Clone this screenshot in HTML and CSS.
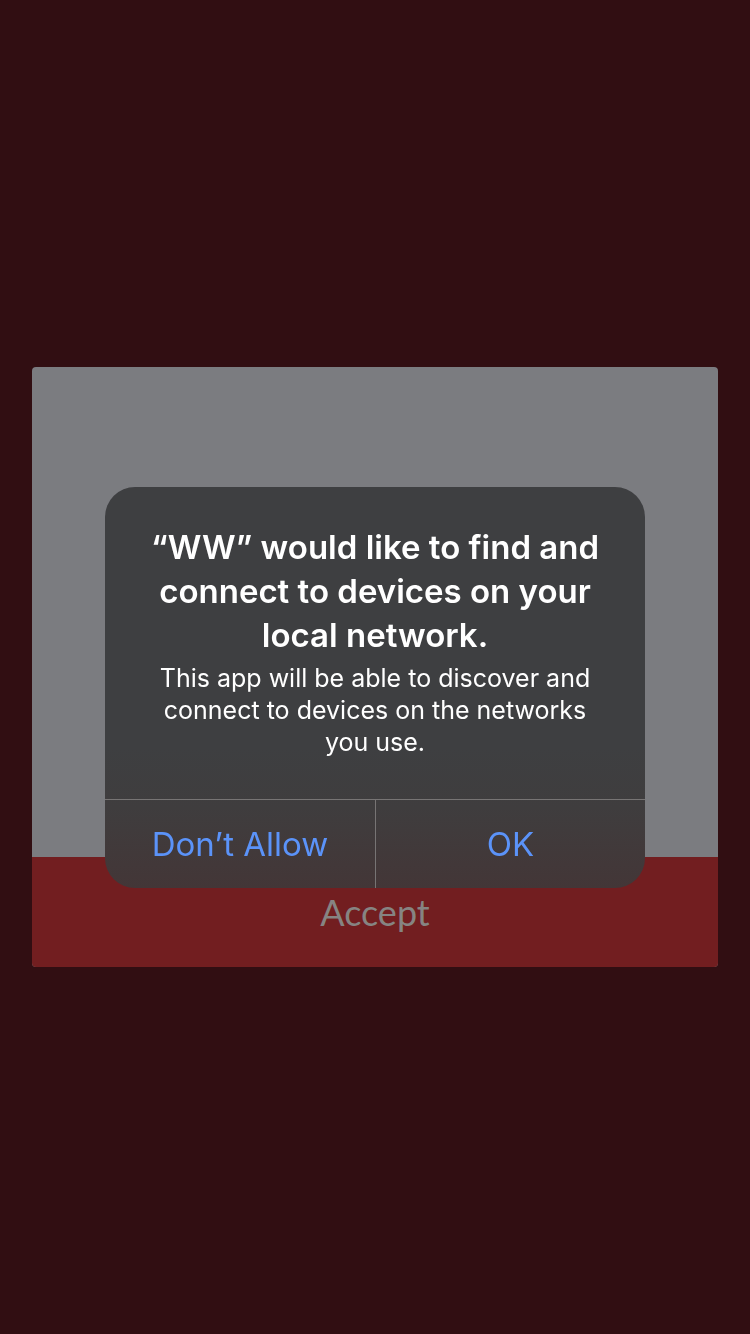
FILE: index.html
```html
<!DOCTYPE html>
<html lang="en">
<head>
  <meta charset="utf-8">
  <meta name="viewport" content="width=device-width, initial-scale=1">
  <title>WW</title>
  <link rel="stylesheet" href="styles.css">
</head>
<body>
  <main class="screen">
    <section class="card">
      <div class="card-content"></div>
      <button class="accept" type="button">Accept</button>
    </section>
  </main>
  <div class="overlay">
    <div class="alert" role="alertdialog" aria-modal="true" aria-labelledby="alert-title" aria-describedby="alert-text">
      <div class="alert-body">
        <h1 class="alert-title" id="alert-title">“WW” would like to find and<br>connect to devices on your<br>local network.</h1>
        <p class="alert-text" id="alert-text">This app will be able to discover and<br>connect to devices on the networks<br>you use.</p>
      </div>
      <div class="alert-actions">
        <button class="alert-button" type="button">Don’t Allow</button>
        <button class="alert-button" type="button">OK</button>
      </div>
    </div>
  </div>
</body>
</html>
```

FILE: styles.css
```css
* {
  box-sizing: border-box;
}

body {
  margin: 0;
  background: #310e12;
  font-family: Inter, "Liberation Sans", sans-serif;
}

button {
  margin: 0;
  padding: 0;
  border: 0;
  background: none;
  font: inherit;
}

.screen {
  display: flex;
  align-items: center;
  min-height: 100vh;
  padding: 32px;
}

.card {
  flex: 1;
  border-radius: 4px;
  overflow: hidden;
  background: #7b7c80;
}

.card-content {
  min-height: 490px;
}

.accept {
  display: block;
  width: 100%;
  padding: 33px 32px;
  background: #721e20;
  color: #868482;
  font-family: Lato, sans-serif;
  font-size: 36px;
  line-height: 44px;
}

.overlay {
  position: fixed;
  inset: 0;
  display: flex;
  align-items: center;
  justify-content: center;
  padding-top: 40px;
}

.alert {
  width: 72%;
  min-width: 500px;
  border-radius: 30px;
  overflow: hidden;
  background: linear-gradient(#3e3f41 0%, #3e3f41 65%, #3f3d3e 80%, #433637 100%);
  text-align: center;
}

.alert-body {
  padding: 38px 32px 41px;
  color: #fff;
}

.alert-title {
  margin: 0 0 5px;
  font-size: 33px;
  font-weight: 600;
  line-height: 44px;
}

.alert-text {
  margin: 0;
  font-size: 25px;
  line-height: 32px;
}

.alert-actions {
  display: grid;
  grid-template-columns: 1fr 1fr;
  border-top: 1px solid #777474;
}

.alert-button {
  padding: 22px 0;
  color: #5b93f9;
  font-size: 33px;
  line-height: 44px;
}

.alert-button + .alert-button {
  border-left: 1px solid #777474;
}
```
